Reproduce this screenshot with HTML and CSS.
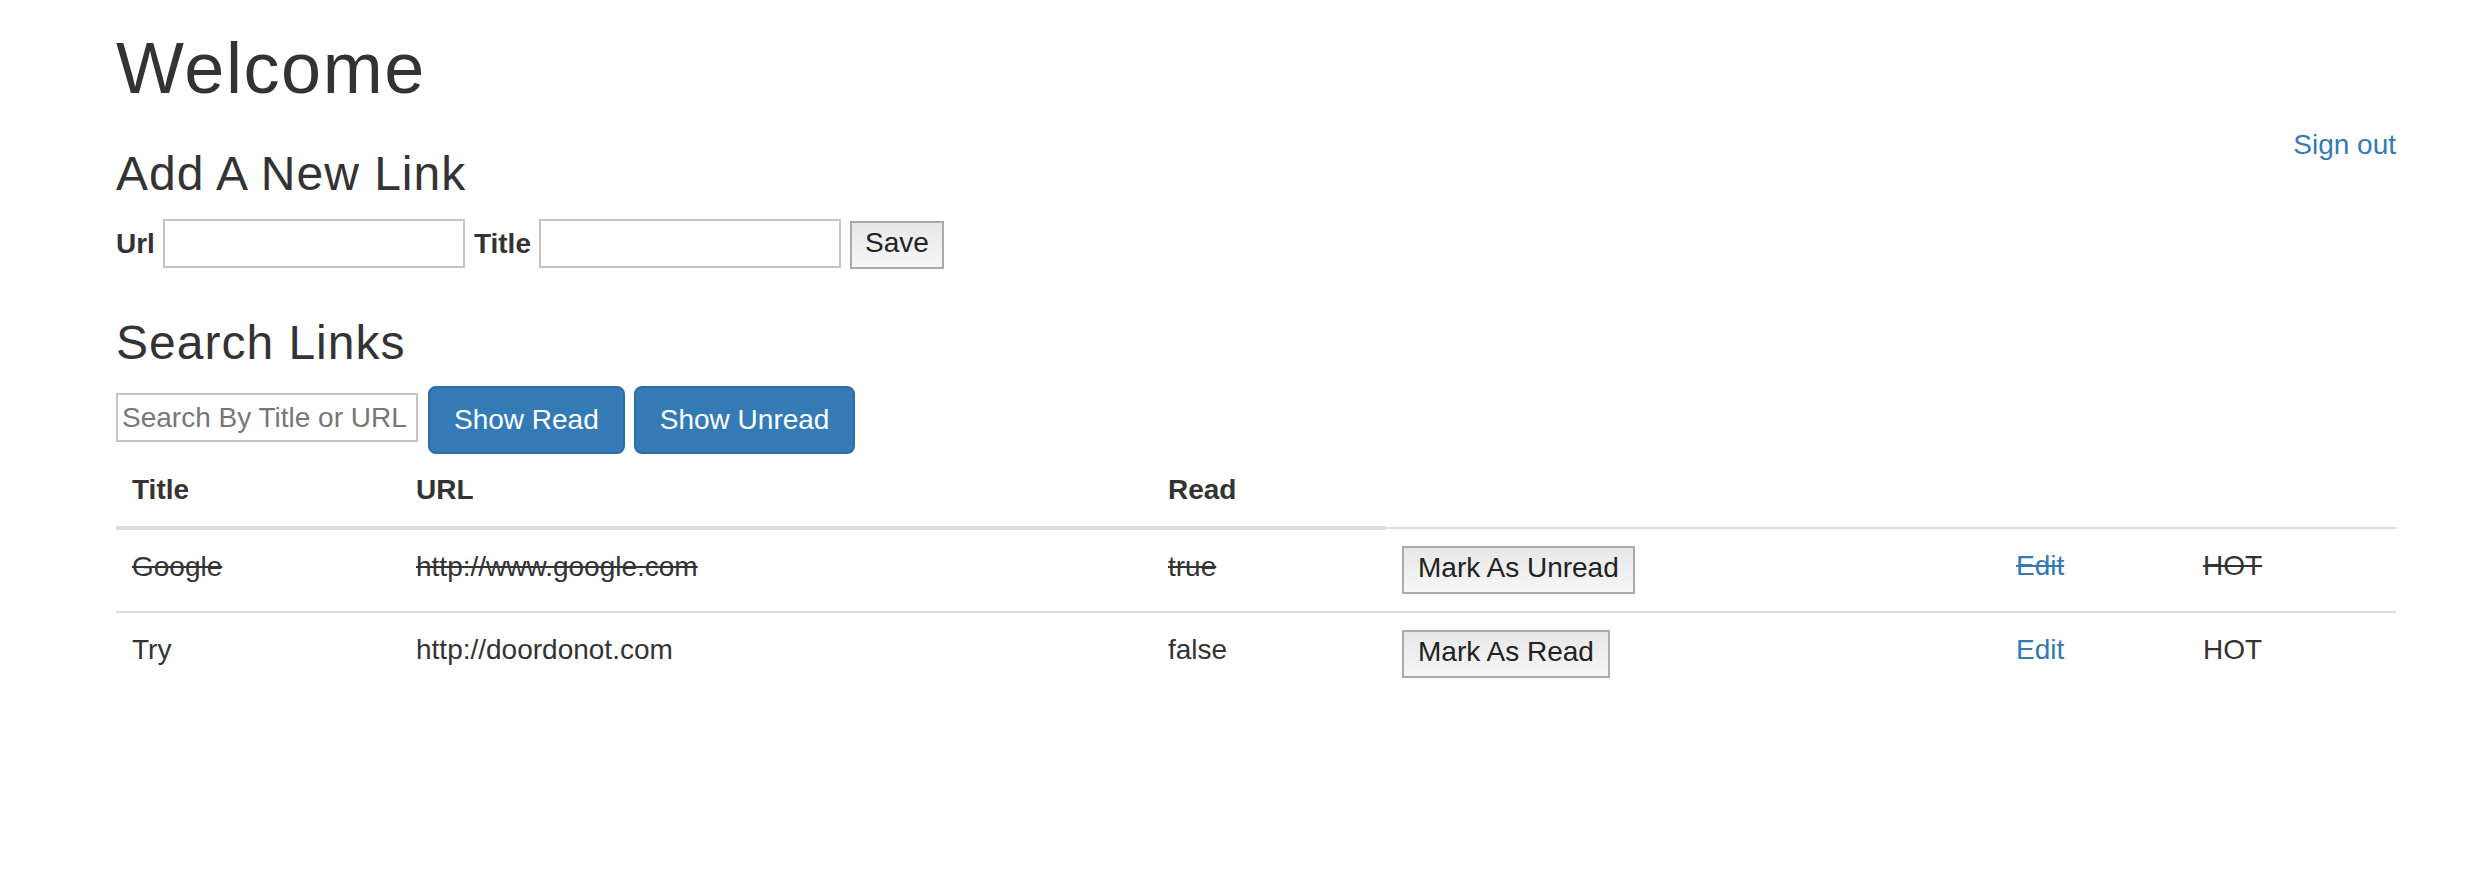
FILE: index.html
```html
<!DOCTYPE html>
<html lang="en">
<head>
<meta charset="utf-8">
<title>Links</title>
<link rel="stylesheet" href="styles.css">
</head>
<body>
<div class="page">
  <div class="top">
    <div class="main">
      <h1 class="title">Welcome</h1>
      <h3 class="section">Add A New Link</h3>
      <form class="add-form">
        <label class="lbl">Url</label>
        <input class="field" type="text">
        <label class="lbl">Title</label>
        <input class="field" type="text">
        <button class="native-btn save" type="button">Save</button>
      </form>
      <h3 class="section section-search">Search Links</h3>
      <div class="search-row">
        <input class="field search" type="text" placeholder="Search By Title or URL">
        <button class="btn-primary first" type="button">Show Read</button>
        <button class="btn-primary" type="button">Show Unread</button>
      </div>
    </div>
    <a class="signout" href="#">Sign out</a>
  </div>
  <table class="links">
    <colgroup>
      <col class="c-title"><col class="c-url"><col class="c-read"><col class="c-btn"><col class="c-edit"><col class="c-hot">
    </colgroup>
    <thead>
      <tr><th>Title</th><th>URL</th><th>Read</th></tr>
    </thead>
    <tbody>
      <tr>
        <td class="struck">Google</td>
        <td class="struck">http://www.google.com</td>
        <td class="struck">true</td>
        <td><button class="native-btn" type="button">Mark As Unread</button></td>
        <td><a class="edit struck" href="#">Edit</a></td>
        <td class="struck">HOT</td>
      </tr>
      <tr>
        <td>Try</td>
        <td>http://doordonot.com</td>
        <td>false</td>
        <td><button class="native-btn" type="button">Mark As Read</button></td>
        <td><a class="edit" href="#">Edit</a></td>
        <td>HOT</td>
      </tr>
    </tbody>
  </table>
</div>
</body>
</html>
```
FILE: styles.css
```css
html, body {
  margin: 0;
  padding: 0;
  background: #fff;
}
body {
  font-family: "Liberation Sans", Arial, Helvetica, sans-serif;
  font-size: 28px;
  line-height: 40px;
  color: #333;
}
.page {
  padding: 0 74px 0 116px;
}
.top {
  display: flex;
  justify-content: space-between;
  align-items: flex-start;
}
.main {
  display: flex;
  flex-direction: column;
  align-items: flex-start;
}
.title {
  margin: 28px 0 0;
  font-size: 72px;
  line-height: 80px;
  font-weight: normal;
  letter-spacing: 1.6px;
}
.section {
  margin: 40px 0 0;
  font-size: 48px;
  line-height: 52px;
  font-weight: normal;
  letter-spacing: 1px;
}
.section-search {
  margin-top: 48px;
}
.add-form {
  display: flex;
  align-items: flex-start;
  margin: 19px 0 0;
}
.lbl {
  font-weight: bold;
  margin: 5px 8px 0 0;
  line-height: 40px;
}
.field {
  box-sizing: border-box;
  width: 302px;
  height: 49px;
  margin: 0 9px 0 0;
  padding: 0 4px;
  border: 2px solid #c4c4c4;
  background: #fff;
  font-family: "Liberation Sans", Arial, sans-serif;
  font-size: 28px;
  color: #333;
  outline: none;
}
.field::placeholder {
  color: #777;
}
.native-btn {
  box-sizing: border-box;
  height: 48px;
  margin: 0;
  padding: 0 14px 4px;
  border: 2px solid #aaa;
  border-radius: 0;
  background: linear-gradient(#e8e8e8, #f6f6f6);
  font-family: "Liberation Sans", Arial, sans-serif;
  font-size: 28px;
  line-height: 40px;
  color: #222;
  vertical-align: top;
}
.save {
  margin-top: 2px;
  padding: 0 13px 4px;
}
.search-row {
  display: flex;
  align-items: flex-start;
  margin-top: 17px;
}
.search {
  margin: 7px 10px 0 0;
}
.btn-primary {
  box-sizing: border-box;
  height: 68px;
  margin: 0;
  padding: 0 24px;
  border: 2px solid #2e6da4;
  border-radius: 8px;
  background: #337ab7;
  color: #fff;
  font-family: "Liberation Sans", Arial, sans-serif;
  font-size: 28px;
  line-height: 64px;
}
.btn-primary.first {
  margin-right: 9px;
}
.signout {
  display: block;
  margin-top: 125px;
  color: #337ab7;
  text-decoration: none;
  line-height: 40px;
}
.links {
  width: 100%;
  border-collapse: collapse;
  table-layout: fixed;
  margin: 0;
}
.c-title { width: 284px; }
.c-url { width: 752px; }
.c-read { width: 234px; }
.c-btn { width: 614px; }
.c-edit { width: 187px; }
.c-hot { width: 209px; }
.links th {
  text-align: left;
  font-weight: bold;
  padding: 16px;
  line-height: 40px;
  border-top: 0;
  border-bottom: 4px solid #ddd;
  vertical-align: bottom;
}
.links td {
  padding: 17px 16px;
  line-height: 40px;
  border-top: 2px solid #ddd;
  vertical-align: top;
  white-space: nowrap;
}
.url {
  letter-spacing: 0.3px;
}
.struck {
  text-decoration: line-through;
}
.edit {
  color: #337ab7;
  text-decoration: none;
}
.edit.struck {
  text-decoration: line-through;
}
```
